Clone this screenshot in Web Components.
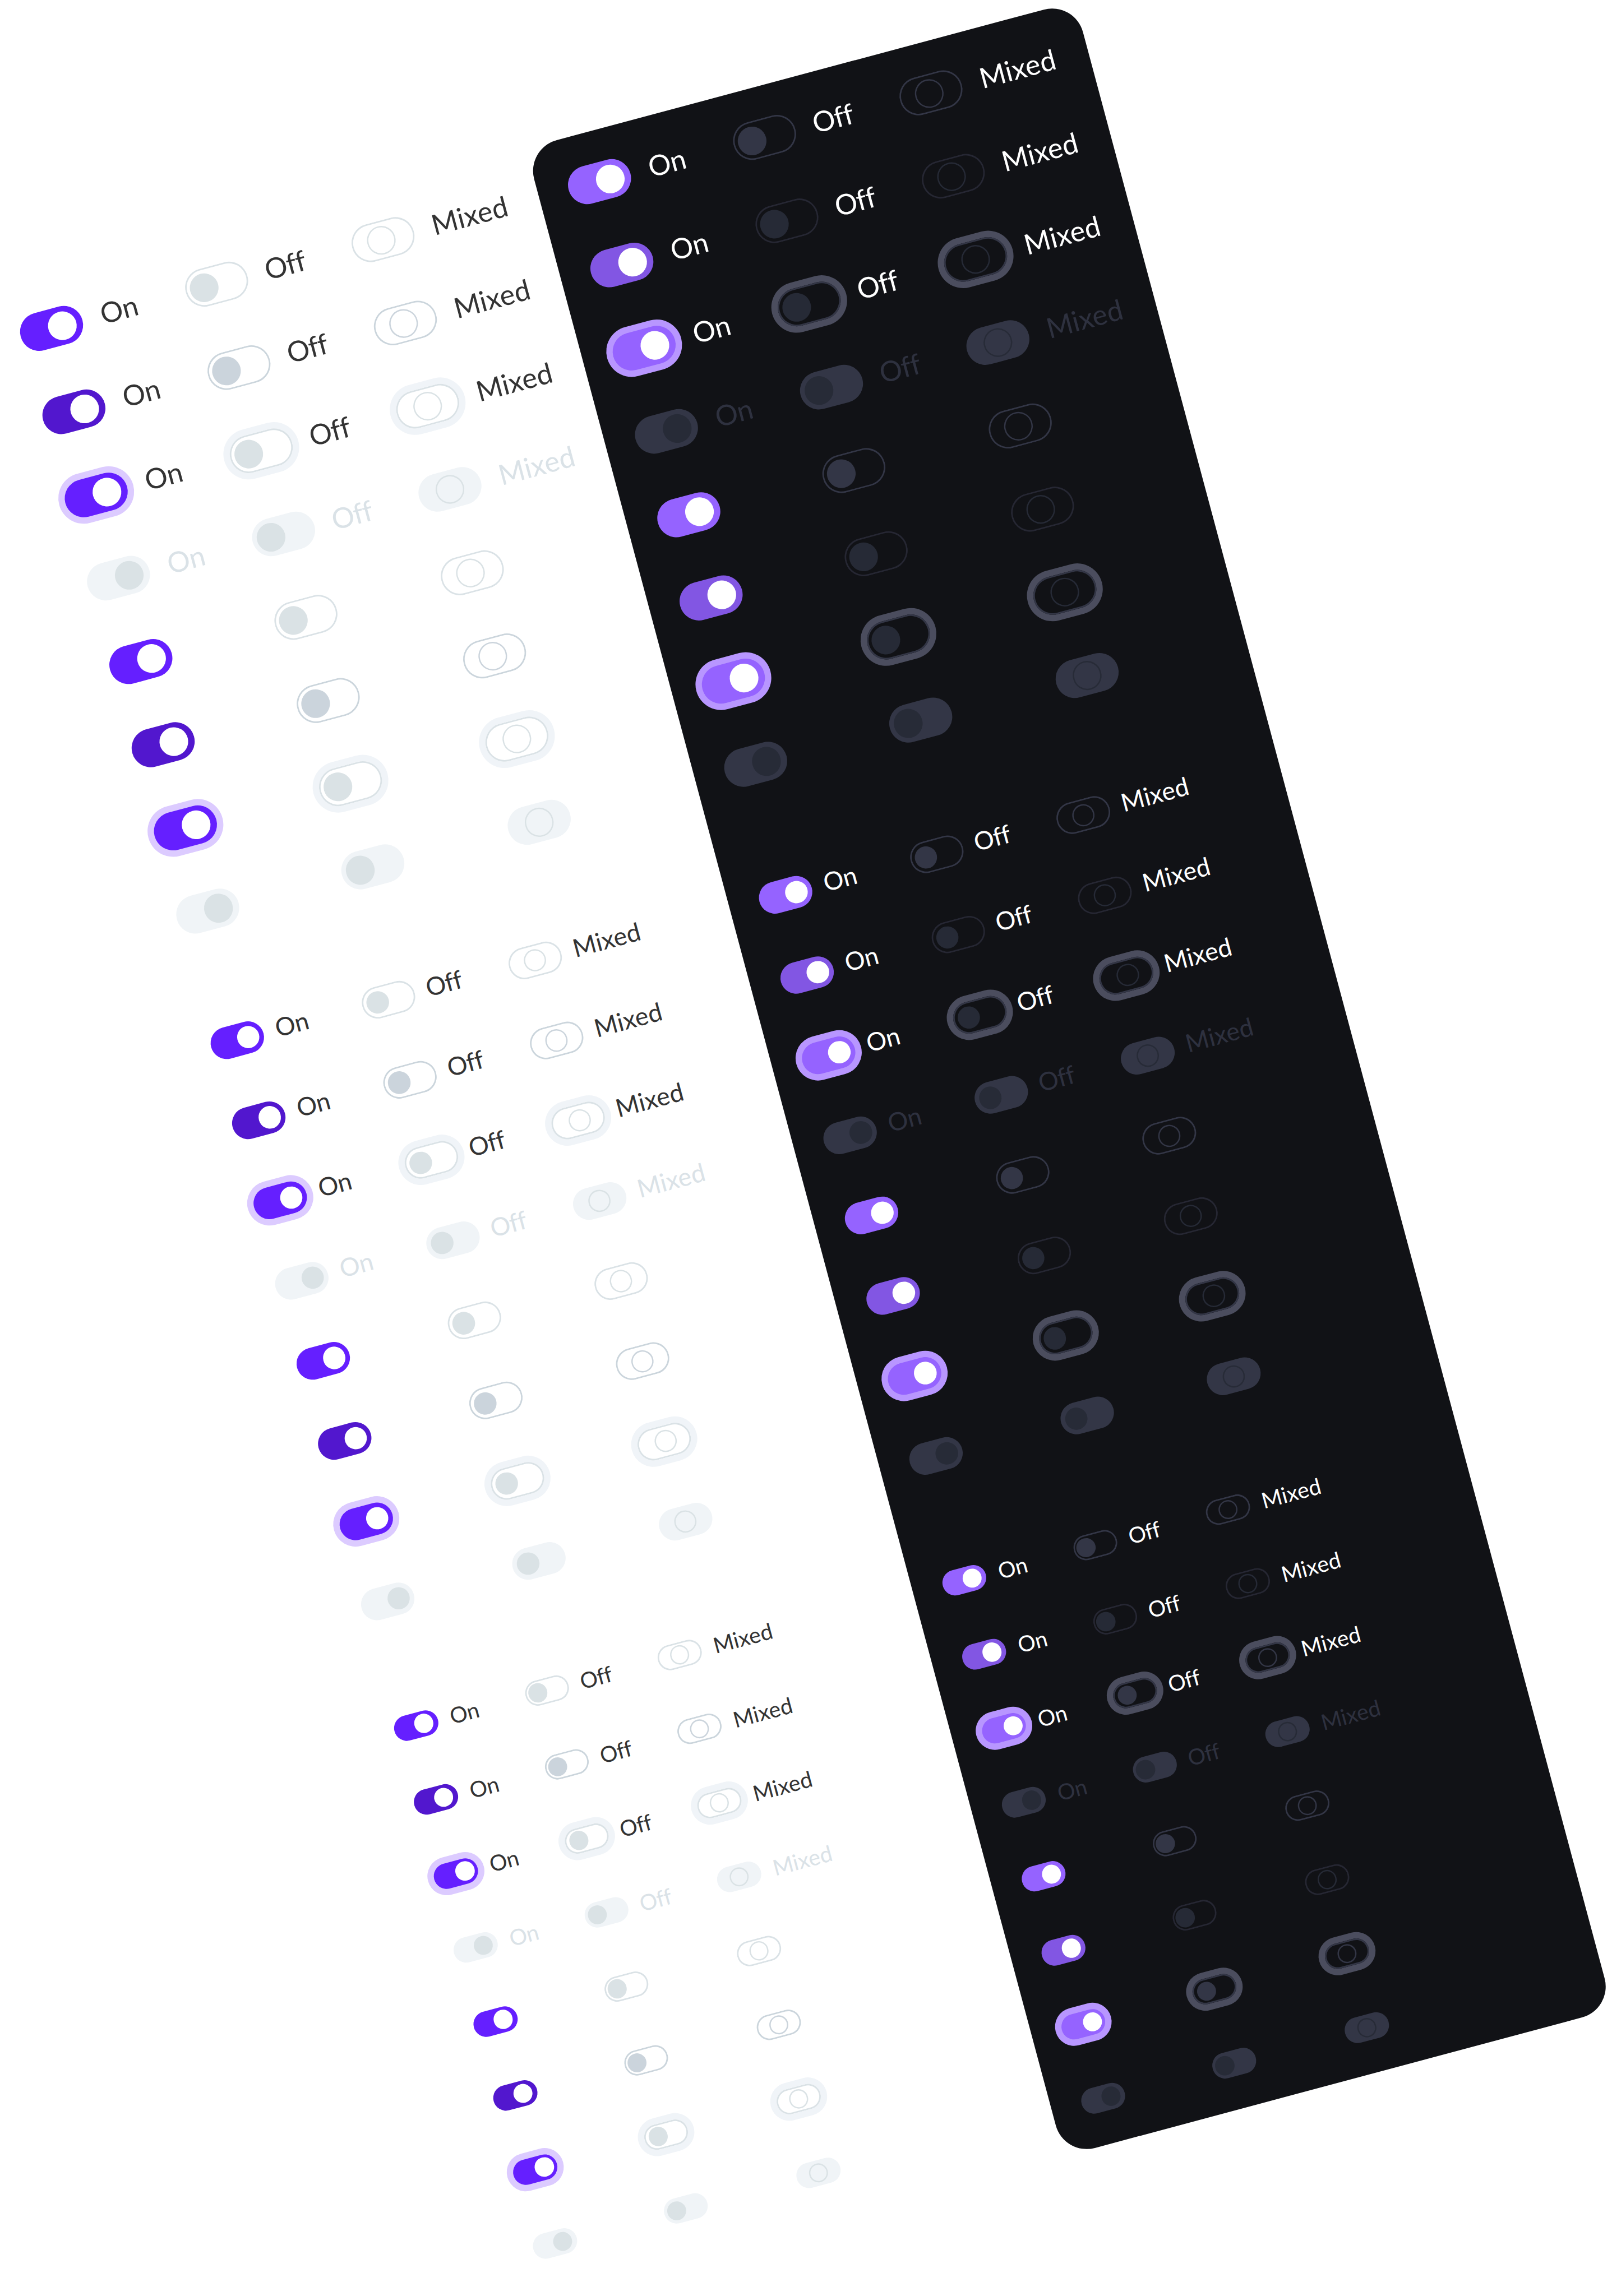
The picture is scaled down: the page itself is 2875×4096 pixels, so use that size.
<!DOCTYPE html>
<html lang="en">
<head>
<meta charset="utf-8">
<title>Switch component sheet</title>
<style>
  html, body { margin: 0; padding: 0; background: #fff; }
  body { width: 2875px; height: 4096px; overflow: hidden; font-family: Lato, "Open Sans", sans-serif; }
</style>
</head>
<body>
<switch-board></switch-board>
<script>
const U = 3.447; // one design pixel in sheet units

const sheet = (root, html) => {
  const t = document.createElement('template');
  t.innerHTML = html;
  root.appendChild(t.content.cloneNode(true));
};

/* A single switch: track, knob and a slotted label. */
class UiSwitch extends HTMLElement {
  connectedCallback() {
    if (this.shadowRoot) return;
    const size = this.getAttribute('size');
    const kind = this.getAttribute('kind');
    const state = this.getAttribute('state');
    const S = {
      large:  { w: 40, h: 24, k: 18, on: 7, off: -8, mixed: -1, font: 61,   gap: 12, lift: 6 },
      medium: { w: 34, h: 20, k: 14, on: 7, off: -7, mixed: 0,  font: 54.2, gap: 8,  lift: 8 },
      small:  { w: 28, h: 16, k: 12, on: 5, off: -6, mixed: 0,  font: 47.5, gap: 8,  lift: 1 }
    }[size];
    const spacing = { on: 0, off: -.014, mixed: .007 }[kind];
    const nudge = kind === 'off' ? -1.5 : 0;
    let shift = S[kind];
    if (size === 'large' && kind === 'mixed' && (state === 'focus' || state === 'disabled')) shift = 0;
    if (size === 'medium' && kind === 'mixed' && state === 'focus') shift = 1;
    if (size === 'small' && kind !== 'mixed' && state === 'focus') shift += 1;
    const left = (S.w / 2 + shift - S.k / 2) * U;
    const root = this.attachShadow({ mode: 'open' });
    sheet(root, `
      <style>
        :host { display: flex; align-items: center; gap: ${S.gap * U + nudge}px; --line: var(--off-line); --fill: var(--off-knob); --ring: var(--off-ring); }
        :host([state=hover]) { --line: var(--hover-line); --fill: var(--hover-knob); }
        :host([state=focus]) { --line: var(--focus-line); --fill: var(--focus-knob); }
        :host([state=focus][size=small]) { --fill: var(--off-knob); }
        .track { flex: none; box-sizing: border-box; display: flex; align-items: center;
          width: ${S.w * U}px; height: ${S.h * U}px; border-radius: ${S.h * U / 2}px;
          box-shadow: inset 0 0 0 ${U}px var(--line); }
        .knob { flex: none; box-sizing: border-box; width: ${S.k * U}px; height: ${S.k * U}px;
          border-radius: 50%; margin-left: ${left}px; background: var(--fill); }
        :host([kind=mixed]) .knob { background: none; border: ${U}px solid var(--fill); }
        :host([state=focus]) .track { box-shadow: inset 0 0 0 ${U}px var(--line), 0 0 0 ${4 * U}px var(--ring); }
        :host([kind=on]) .track { background: var(--on); box-shadow: none; }
        :host([kind=on]) .knob { background: #fff; }
        :host([kind=on][state=hover]) .track { background: var(--on-hover); }
        :host([kind=on][state=focus]) .track { box-shadow: 0 0 0 ${4 * U}px var(--on-ring); }
        :host([state=disabled]) .track { background: var(--dis); box-shadow: none; }
        :host([state=disabled]) .knob { background: var(--dis-knob); }
        :host([state=disabled][kind=mixed]) .knob { background: none; border-color: var(--dis-knob); }
        .label { font-size: ${S.font}px; line-height: 1.2; padding-bottom: ${S.lift}px; white-space: nowrap;
          letter-spacing: ${spacing}em; color: var(--text); font-variant-ligatures: none; }
        :host([state=disabled]) .label { color: var(--dis-text); }
      </style>
      <div class="track"><div class="knob"></div></div>
      <div class="label"><slot></slot></div>`);
  }
}
customElements.define('ui-switch', UiSwitch);

/* Eight rows of switches of one size: four labelled, four bare. */
class SwitchGroup extends HTMLElement {
  connectedCallback() {
    if (this.shadowRoot) return;
    const size = this.getAttribute('size');
    const G = {
      large:  { row: 186.1, cols: '368.9px 372px 1fr' },
      medium: { row: 179.3, cols: '338.1px 327.5px 1fr' },
      small:  { row: 165.5, cols: '292.8px 296.4px 1fr' }
    }[size];
    let cells = '';
    for (const labelled of [true, false])
      for (const state of ['normal', 'hover', 'focus', 'disabled'])
        for (const [kind, text] of [['on', 'On'], ['off', 'Off'], ['mixed', 'Mixed']])
          cells += `<ui-switch size="${size}" kind="${kind}" state="${state}">${labelled ? text : ''}</ui-switch>`;
    const root = this.attachShadow({ mode: 'open' });
    sheet(root, `
      <style>
        :host { display: grid; grid-template-columns: ${G.cols}; grid-auto-rows: ${G.row}px; }
      </style>${cells}`);
  }
}
customElements.define('switch-group', SwitchGroup);

/* Themed surface holding the three sizes. */
class ThemePanel extends HTMLElement {
  connectedCallback() {
    if (this.shadowRoot) return;
    const root = this.attachShadow({ mode: 'open' });
    sheet(root, `
      <style>
        :host { box-sizing: border-box; display: flex; flex-direction: column; flex: none;
          width: 1227.8px; height: 4490px; padding: 17.8px 0 0 69px; gap: 102.4px;
          --text: #333; --on: #651fff; --on-hover: #5217ce; --on-ring: #dccbff;
          --off-line: #dae2e6; --off-knob: #dae2e5; --off-ring: #f0f4f8;
          --hover-line: #cbd5dc; --hover-knob: #cbd4dc;
          --focus-line: #dae2e6; --focus-knob: #dae2e5;
          --dis: #f0f4f7; --dis-knob: #dae2e5; --dis-text: #dae2e7; }
        :host([theme=dark]) { width: 1227px; padding-left: 66px; background: #111216; border-radius: 69px;
          --text: #fff; --on: #9563ff; --on-hover: #8256e3; --on-ring: #b896ff;
          --off-line: #333646; --off-knob: #333646; --off-ring: #4b4d5e;
          --hover-line: #262733; --hover-knob: #262a36;
          --focus-line: #333646; --focus-knob: #262a36;
          --dis: #333646; --dis-knob: #272b37; --dis-text: #2e313f; }
        .gap { margin-bottom: .7px; }
        :host([theme=dark]) .gap { margin-bottom: 4.1px; }
      </style>
      <switch-group size="large" class="gap"></switch-group>
      <switch-group size="medium"></switch-group>
      <switch-group size="small"></switch-group>`);
  }
}
customElements.define('theme-panel', ThemePanel);

/* The tilted sheet with the light and dark panels side by side. */
class SwitchBoard extends HTMLElement {
  connectedCallback() {
    if (this.shadowRoot) return;
    const root = this.attachShadow({ mode: 'open' });
    sheet(root, `
      <style>
        :host { display: block; width: 2875px; height: 4096px; overflow: hidden; background: #fff; }
        .sheet { display: flex; width: 2460px; transform-origin: 0 0;
          transform: scale(.8259) rotate(-15deg) translate(-214px, 603.5px); }
      </style>
      <div class="sheet"><theme-panel theme="light"></theme-panel><theme-panel theme="dark"></theme-panel></div>`);
  }
}
customElements.define('switch-board', SwitchBoard);
</script>
</body>
</html>
